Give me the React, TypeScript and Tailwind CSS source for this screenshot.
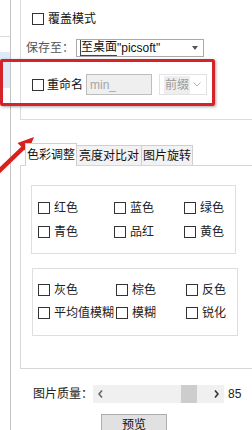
import React from 'react';

const FONT = "font-['Liberation_Sans','Noto_Sans_CJK_SC',sans-serif]";

function Box({ className = '' }: { className?: string }) {
  return (
    <span
      className={`inline-block h-[12px] w-[12px] shrink-0 border border-[#333] bg-white ${className}`}
    />
  );
}

function Check({ label }: { label: string }) {
  return (
    <div className="flex items-center gap-[4px] whitespace-nowrap">
      <Box />
      <span className="text-[12px] leading-[14px] text-[#222]">{label}</span>
    </div>
  );
}

const colorRows = [
  ['红色', '蓝色', '绿色'],
  ['青色', '品红', '黄色'],
];

const effectRows = [
  ['灰色', '棕色', '反色'],
  ['平均值模糊', '模糊', '锐化'],
];

function Arrow() {
  // red annotation arrow, page coords shifted by top=130
  return (
    <svg
      className="absolute left-0 top-[130px]"
      width="40"
      height="45"
      viewBox="0 0 40 45"
    >
      <line
        x1="-2"
        y1="42"
        x2="22"
        y2="19"
        stroke="#d8201c"
        strokeWidth="4.5"
        strokeLinecap="round"
      />
      <polygon points="34,7 27.5,23 17.5,13" fill="#d8201c" />
    </svg>
  );
}

export default function App() {
  return (
    <div
      className={`relative flex h-[430px] w-[252px] overflow-hidden bg-white ${FONT}`}
    >
      {/* left file list strip */}
      <div className="flex w-[11px] shrink-0 flex-col border-r border-[#c4c4c4]">
        <div className="h-[37px] border-b border-[#dadada]" />
        <div className="mt-[15px] h-[36px] bg-[#dfeaf7]" />
      </div>

      <div className="flex min-w-0 flex-1 flex-col pl-[9px]">
        {/* output options group */}
        <div className="flex h-[120px] w-[260px] shrink-0 flex-col border-b border-l border-[#dcdcdc]">
          <div className="mt-[13px] flex items-center gap-[4px] pl-[11px]">
            <Box />
            <span className="text-[12px] leading-[12px] text-[#111]">覆盖模式</span>
          </div>

          <div className="mt-[14px] flex h-[18px] items-center pl-[5px]">
            <span className="w-[50px] text-[12px] text-[#555]">保存至：</span>
            <div className="flex h-[18px] w-[128px] items-center border border-[#a9a9a9] bg-white pl-[3px] pr-[5px] text-[12px] text-[#111]">
              <span className="border-b border-l border-[#444] leading-[15px]">至桌面</span>
              <span className="leading-[15px]">"picsoft"</span>
              <svg className="ml-auto" width="6" height="4" viewBox="0 0 6 4">
                <polygon points="0,0 6,0 3,4" fill="#555" />
              </svg>
            </div>
          </div>

          <div className="mt-[17px] flex h-[21px] items-center pl-[11px]">
            <Box />
            <span className="ml-[3px] text-[12px] text-[#111]">重命名</span>
            <div className="ml-[3px] flex h-[21px] w-[66px] items-center border border-[#bdbdbd] bg-[#efefef] pl-[3px] text-[12px] text-[#a6a6a6]">
              min_
            </div>
            <div className="ml-[7px] flex h-[21px] w-[48px] items-center border border-[#e2e2e2] bg-white pl-[4px] pr-[5px] text-[12px] text-[#9a9a9a]">
              <span className="bg-[#eeeeee] px-[1px]">前缀</span>
              <svg className="ml-auto" width="8" height="5" viewBox="0 0 8 5">
                <polyline points="0.5,0.5 4,4 7.5,0.5" fill="none" stroke="#b5b5b5" strokeWidth="1" />
              </svg>
            </div>
          </div>
        </div>

        {/* tabs */}
        <div className="relative z-10 -mb-px ml-[5px] mt-[23px] flex h-[23px] items-end text-[12px] text-[#111]">
          <div className="flex h-[23px] w-[52px] items-center justify-center border-l border-r border-t border-[#cfcfcf] bg-white">
            色彩调整
          </div>
          <div className="mb-px flex h-[20px] w-[65px] items-center justify-center border-r border-t border-[#cfcfcf] bg-[#f2f2f2]">
            亮度对比对
          </div>
          <div className="mb-px flex h-[20px] w-[51px] items-center justify-center border-r border-t border-[#cfcfcf] bg-[#f2f2f2]">
            图片旋转
          </div>
        </div>

        {/* tab panel */}
        <div className="flex h-[204px] w-[260px] shrink-0 flex-col border-b border-l border-t border-[#d6d6d6] bg-white">
          <div className="ml-[10px] mt-[19px] h-[69px] w-[205px] border border-[#dedede] pl-[6px] pt-[10px]">
            {colorRows.map((row, i) => (
              <div key={i} className="grid h-[24px] grid-cols-[76px_70px_1fr] items-center">
                {row.map((label) => (
                  <Check key={label} label={label} />
                ))}
              </div>
            ))}
          </div>

          <div className="ml-[11px] mt-[14px] h-[68px] w-[206px] border border-[#dedede] pl-[5px] pt-[9px]">
            {effectRows.map((row, i) => (
              <div key={i} className="grid h-[23px] grid-cols-[78px_70px_1fr] items-center">
                {row.map((label) => (
                  <Check key={label} label={label} />
                ))}
              </div>
            ))}
          </div>
        </div>

        {/* quality slider */}
        <div className="mt-[16px] flex h-[18px] items-center pl-[13px]">
          <span className="w-[60px] text-[12px] text-[#222]">图片质量：</span>
          <div className="flex h-[18px] w-[131px] items-center bg-[#f0f0f0]">
            <svg className="ml-[5px]" width="5" height="8" viewBox="0 0 5 8">
              <polyline points="4,0.5 1,4 4,7.5" fill="none" stroke="#666" strokeWidth="1.6" />
            </svg>
            <div className="ml-[78px] h-[18px] w-[16px] bg-[#cdcdcd]" />
            <svg className="ml-[17px]" width="5" height="8" viewBox="0 0 5 8">
              <polyline points="1,0.5 4,4 1,7.5" fill="none" stroke="#333" strokeWidth="1.6" />
            </svg>
          </div>
          <span className="ml-[4px] text-[12px] text-[#222]">85</span>
        </div>

        <div className="ml-[81px] mt-[11px] flex h-[22px] w-[66px] shrink-0 items-center justify-center border border-[#adadad] bg-[#e1e1e1] text-[12px] text-[#111]">
          预览
        </div>
      </div>

      {/* annotation overlays */}
      <div className="absolute left-0 top-[59px] h-[47px] w-[215px] rounded-[2px] border-[3px] border-[#d4242a] shadow-[1px_1px_3px_rgba(0,0,0,0.35)]" />
      <Arrow />
    </div>
  );
}
